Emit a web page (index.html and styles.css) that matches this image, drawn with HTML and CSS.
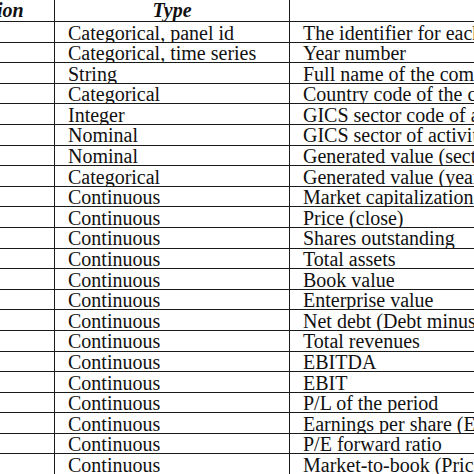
FILE: index.html
```html
<!DOCTYPE html>
<html lang="en">
<head>
<meta charset="utf-8">
<title>Variables</title>
<link rel="stylesheet" href="styles.css">
</head>
<body>
<div class="page">
<table class="vars">
<colgroup>
<col class="c-name">
<col class="c-type">
<col class="c-desc">
</colgroup>
<thead>
<tr><th>Definition</th><th>Type</th><th></th></tr>
</thead>
<tbody>
<tr><td></td><td>Categorical, panel id</td><td>The identifier for each company</td></tr>
<tr><td></td><td>Categorical, time series</td><td>Year number</td></tr>
<tr><td></td><td>String</td><td>Full name of the company</td></tr>
<tr><td></td><td>Categorical</td><td>Country code of the company</td></tr>
<tr><td></td><td>Integer</td><td>GICS sector code of activity</td></tr>
<tr><td></td><td>Nominal</td><td>GICS sector of activity</td></tr>
<tr><td></td><td>Nominal</td><td>Generated value (sector)</td></tr>
<tr><td></td><td>Categorical</td><td>Generated value (year)</td></tr>
<tr><td></td><td>Continuous</td><td>Market capitalization</td></tr>
<tr><td></td><td>Continuous</td><td>Price (close)</td></tr>
<tr><td></td><td>Continuous</td><td>Shares outstanding</td></tr>
<tr><td></td><td>Continuous</td><td>Total assets</td></tr>
<tr><td></td><td>Continuous</td><td>Book value</td></tr>
<tr><td></td><td>Continuous</td><td>Enterprise value</td></tr>
<tr><td></td><td>Continuous</td><td>Net debt (Debt minus cash)</td></tr>
<tr><td></td><td>Continuous</td><td>Total revenues</td></tr>
<tr><td></td><td>Continuous</td><td>EBITDA</td></tr>
<tr><td></td><td>Continuous</td><td>EBIT</td></tr>
<tr><td></td><td>Continuous</td><td>P/L of the period</td></tr>
<tr><td></td><td>Continuous</td><td>Earnings per share (EPS)</td></tr>
<tr><td></td><td>Continuous</td><td>P/E forward ratio</td></tr>
<tr><td></td><td>Continuous</td><td>Market-to-book (Price/Book)</td></tr>
</tbody>
</table>
</div>
</body>
</html>
```
FILE: styles.css
```css
html, body {
  margin: 0;
  padding: 0;
  background: #fff;
}
.page {
  width: 474px;
  height: 474px;
  overflow: hidden;
}
.vars {
  border-collapse: collapse;
  table-layout: fixed;
  width: 692px;
  margin-left: -92px;
  font-family: "Liberation Serif", "Times New Roman", serif;
  font-size: 20px;
  color: #111;
}
.c-name { width: 146px; }
.c-type { width: 235px; }
.c-desc { width: 311px; }
.vars th,
.vars td {
  border: 1.5px solid #1a1a1a;
  padding: 1.5px 0 0 13px;
  line-height: 18.1px;
  white-space: nowrap;
  overflow: hidden;
  text-align: left;
  vertical-align: bottom;
}
.vars thead th {
  border-top: none;
  font-weight: bold;
  font-style: italic;
  text-align: center;
  padding: 0;
  line-height: 21px;
}
```
